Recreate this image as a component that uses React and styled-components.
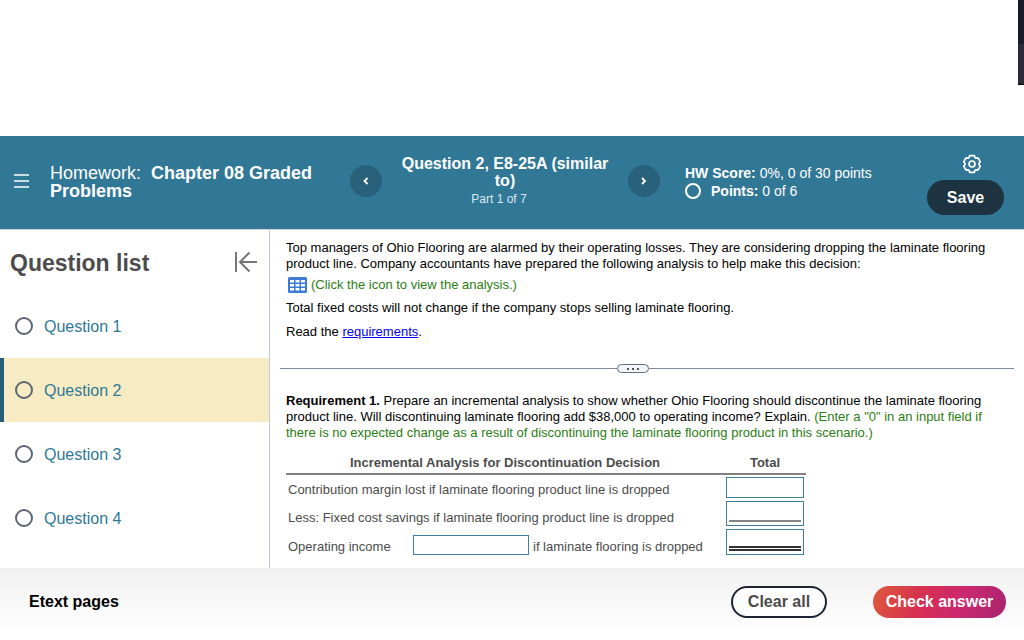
import React from "react";
import styled, { createGlobalStyle } from "styled-components";

const questions = ["Question 1", "Question 2", "Question 3", "Question 4"];

function App() {
  const current = 1;

  return (
    <Page>
      <GlobalStyle />
      <TopSpace>
        <Strip />
      </TopSpace>

      <Header>
        <MenuButton aria-label="Menu">
          <svg width="16" height="14" viewBox="0 0 16 14" fill="none" stroke="#fff" strokeWidth="1.6">
            <path d="M0 1h15M0 7h15M0 13h15" />
          </svg>
        </MenuButton>
        <HomeworkTitle>
          Homework:&nbsp; <b>Chapter 08 Graded Problems</b>
        </HomeworkTitle>
        <QuestionNav>
          <RoundButton aria-label="Previous question">
            <svg width="8" height="10" viewBox="0 0 8 10" fill="none" stroke="#fff" strokeWidth="1.8">
              <path d="M5.500 2L2.500 5L5.500 8" />
            </svg>
          </RoundButton>
          <NavText>
            <h2>Question 2, E8-25A (similar to)</h2>
            <p>Part 1 of 7</p>
          </NavText>
          <RoundButton aria-label="Next question">
            <svg width="8" height="10" viewBox="0 0 8 10" fill="none" stroke="#fff" strokeWidth="1.8">
              <path d="M2 2L5 5L2 8" />
            </svg>
          </RoundButton>
        </QuestionNav>
        <Score>
          <div>
            <b>HW Score:</b> 0%, 0 of 30 points
          </div>
          <PointsRow>
            <Ring $size={16} $color="#fff" />
            <span>
              <b>Points:</b> 0 of 6
            </span>
          </PointsRow>
        </Score>
        <Actions>
          <IconButton aria-label="Settings">
            <svg width="20" height="20" viewBox="0 0 20 20" fill="none" stroke="#fff" strokeWidth="1.7" strokeLinejoin="round">
              <path d="M7.600 1.700h4.800Q12.800 5.200 16 3.800L18.300 7.900Q15.600 10 18.300 12.100L16 16.200Q12.800 14.800 12.400 18.300H7.600Q7.200 14.800 4 16.200L1.700 12.100Q4.400 10 1.700 7.900L4 3.800Q7.200 5.200 7.600 1.700z" />
              <circle cx="10" cy="10" r="3" />
            </svg>
          </IconButton>
          <SaveButton>Save</SaveButton>
        </Actions>
      </Header>

      <Body>
        <Sidebar>
          <SidebarHead>
            <h1>Question list</h1>
            <IconButton aria-label="Collapse question list">
              <svg width="24" height="22" viewBox="0 0 24 22" fill="none" stroke="#757776" strokeWidth="2">
                <path d="M2 1v20M23 11H6M15.500 1.500L6 11l9.500 9.500" />
              </svg>
            </IconButton>
          </SidebarHead>
          <List>
            {questions.map((name, i) => (
              <QuestionItem key={name} $active={i === current}>
                <Ring $size={18} $color="#5b6570" />
                <a href="#question">{name}</a>
              </QuestionItem>
            ))}
          </List>
        </Sidebar>

        <Content>
          <Problem>
            <p>
              Top managers of Ohio Flooring are alarmed by their operating losses. They are considering dropping the
              laminate flooring product line. Company accountants have prepared the following analysis to help make
              this decision:
            </p>
            <AnalysisButton>
              <svg width="19" height="16" viewBox="0 0 19 16">
                <rect width="19" height="16" rx="1.500" fill="#3b7bd6" />
                <path
                  fill="#fff"
                  d="M2 3h4v2.500H2zM7.500 3h4v2.500h-4zM13 3h4v2.500h-4zM2 7h4v2.500H2zM7.500 7h4v2.500h-4zM13 7h4v2.500h-4zM2 11h4v2.500H2zM7.500 11h4v2.500h-4zM13 11h4v2.500h-4z"
                />
              </svg>
              (Click the icon to view the analysis.)
            </AnalysisButton>
            <p>Total fixed costs will not change if the company stops selling laminate flooring.</p>
            <p>
              Read the <a href="#requirements">requirements</a>.
            </p>
          </Problem>

          <Divider>
            <Handle aria-label="Resize panels">
              <i />
              <i />
              <i />
            </Handle>
          </Divider>

          <Requirement>
            <p>
              <b>Requirement 1.</b> Prepare an incremental analysis to show whether Ohio Flooring should discontinue
              the laminate flooring product line. Will discontinuing laminate flooring add $38,000 to operating
              income? Explain.{" "}
              <Hint>
                (Enter a "0" in an input field if there is no expected change as a result of discontinuing the
                laminate flooring product in this scenario.)
              </Hint>
            </p>
            <Table>
              <thead>
                <tr>
                  <th>Incremental Analysis for Discontinuation Decision</th>
                  <th>Total</th>
                </tr>
              </thead>
              <tbody>
                <tr>
                  <td>
                    <label htmlFor="margin">Contribution margin lost if laminate flooring product line is dropped</label>
                  </td>
                  <td>
                    <Field $height={21}>
                      <input id="margin" type="text" />
                    </Field>
                  </td>
                </tr>
                <tr>
                  <td>
                    <label htmlFor="savings">Less: Fixed cost savings if laminate flooring product line is dropped</label>
                  </td>
                  <td>
                    <Field $height={25} $rule="2px solid #858585">
                      <input id="savings" type="text" />
                    </Field>
                  </td>
                </tr>
                <tr>
                  <td>
                    <IncomeRow>
                      <label htmlFor="income">Operating income</label>
                      <DirectionInput type="text" aria-label="Increase or decrease" />
                      <span>if laminate flooring is dropped</span>
                    </IncomeRow>
                  </td>
                  <td>
                    <Field $height={26} $rule="5px double #333">
                      <input id="income" type="text" />
                    </Field>
                  </td>
                </tr>
              </tbody>
            </Table>
          </Requirement>
        </Content>
      </Body>

      <Footer>
        <a href="#etext">Etext pages</a>
        <ClearButton>Clear all</ClearButton>
        <CheckButton>Check answer</CheckButton>
      </Footer>
    </Page>
  );
}

export default App;

const GlobalStyle = createGlobalStyle`
  * {
    box-sizing: border-box;
  }
  body {
    margin: 0;
    background: #fff;
    color: #000;
    font-family: "Liberation Sans", Arial, sans-serif;
    font-size: 13px;
  }
  h1, h2, p, ul {
    margin: 0;
    padding: 0;
  }
  button, input {
    font-family: inherit;
  }
  button {
    border: none;
    padding: 0;
    background: none;
    cursor: pointer;
  }
  svg {
    display: block;
    flex: none;
  }
`;

const Page = styled.div`
  display: flex;
  flex-direction: column;
  min-height: 100vh;
`;

const TopSpace = styled.div`
  display: flex;
  justify-content: flex-end;
  align-items: flex-start;
  height: 136px;
`;

const Strip = styled.div`
  width: 6px;
  height: 85px;
  background: linear-gradient(#181c26 44px, #2b2c38 44px);
  border-bottom: 1px solid #000;
`;

const Header = styled.header`
  display: grid;
  grid-template-columns: 36px 300fr 335fr 242fr 77px;
  align-items: center;
  padding: 10px 20px 14px 14px;
  border-bottom: 1px solid #cfcfe0;
  background: #317796;
  color: #fff;
`;

const MenuButton = styled.button`
  justify-self: start;
`;

const HomeworkTitle = styled.div`
  padding: 2px 30px 0 0;
  font-size: 18px;
  line-height: 18px;
`;

const QuestionNav = styled.nav`
  display: flex;
  align-items: center;
  justify-content: space-between;
  padding-right: 25px;
`;

const RoundButton = styled.button`
  display: flex;
  align-items: center;
  justify-content: center;
  width: 32px;
  height: 32px;
  border-radius: 50%;
  background: #29617b;
`;

const NavText = styled.div`
  flex: 1;
  padding: 0 16px;
  text-align: center;
  > h2 {
    font-size: 16px;
    line-height: 17px;
  }
  > p {
    padding: 2px 12px 0 0;
    color: #dbe8f0;
    font-size: 12px;
    line-height: 16px;
  }
`;

const Score = styled.div`
  padding-top: 2px;
  font-size: 14px;
  line-height: 18px;
`;

const PointsRow = styled.div`
  display: flex;
  align-items: center;
  gap: 10px;
`;

const Ring = styled.span`
  flex: none;
  width: ${(props) => props.$size}px;
  height: ${(props) => props.$size}px;
  border: 2px solid ${(props) => props.$color};
  border-radius: 50%;
`;

const Actions = styled.div`
  display: flex;
  flex-direction: column;
  align-items: center;
  gap: 6px;
  padding-top: 8px;
`;

const IconButton = styled.button`
  margin-left: 12px;
`;

const SaveButton = styled.button`
  width: 100%;
  height: 35px;
  border-radius: 18px;
  background: #1e3341;
  color: #fff;
  font-size: 16px;
  font-weight: bold;
`;

const Body = styled.div`
  display: flex;
  flex: 1;
`;

const Sidebar = styled.aside`
  flex: none;
  width: 270px;
  border-right: 1px solid #c8c8d4;
`;

const SidebarHead = styled.div`
  display: flex;
  align-items: center;
  justify-content: space-between;
  height: 64px;
  padding: 0 11px 0 10px;
  > h1 {
    padding-top: 2px;
    color: #4c4c4c;
    font-size: 23px;
  }
`;

const List = styled.ul`
  list-style: none;
`;

const QuestionItem = styled.li`
  display: flex;
  align-items: center;
  gap: 11px;
  height: 64px;
  padding-left: 11px;
  border-left: 4px solid ${(props) => (props.$active ? "#235f78" : "transparent")};
  background: ${(props) => (props.$active ? "#f6ebc3" : "transparent")};
  > a {
    padding-top: 2px;
    color: #2f7896;
    font-size: 16px;
    text-decoration: none;
  }
`;

const Content = styled.main`
  flex: 1;
  padding: 10px;
  line-height: 16px;
`;

const Problem = styled.section`
  display: flex;
  flex-direction: column;
  gap: 8px;
  padding: 0 6px;
  > p > a {
    color: #0000ee;
  }
`;

const AnalysisButton = styled.button`
  display: flex;
  align-items: center;
  gap: 4px;
  margin: -5px 0 -3px 2px;
  align-self: flex-start;
  color: #2b7d14;
  font-size: 13px;
  line-height: 20px;
`;

const Divider = styled.div`
  display: flex;
  align-items: center;
  margin: 24px 0 20px;
  &::before,
  &::after {
    content: "";
    flex: 337 1 0;
    height: 1px;
    background: #7d8b9b;
  }
  &::after {
    flex-grow: 365;
  }
`;

const Handle = styled.button`
  display: flex;
  align-items: center;
  justify-content: center;
  gap: 3px;
  width: 32px;
  height: 9px;
  border: 1px solid #5f6f80;
  border-radius: 5px;
  background: #f3f6f8;
  > i {
    width: 2px;
    height: 2px;
    background: #4a5560;
  }
`;

const Requirement = styled.section`
  padding: 0 6px;
`;

const Hint = styled.span`
  color: #2b7d14;
`;

const Table = styled.table`
  width: 520px;
  margin-top: 14px;
  border-collapse: collapse;
  color: #4c4c4c;
  th {
    padding: 0 0 2px;
    border-bottom: 2px solid #808080;
  }
  th:last-child {
    width: 82px;
  }
  td {
    padding: 2px 2px 1px;
    vertical-align: bottom;
  }
`;

const Field = styled.div`
  height: ${(props) => props.$height}px;
  padding: 0 2px 3px;
  border: 1px solid #3d7f9c;
  > input {
    display: block;
    width: 100%;
    height: 100%;
    padding: 0;
    border: none;
    border-bottom: ${(props) => props.$rule || "none"};
    outline: none;
    background: none;
    text-align: right;
  }
`;

const IncomeRow = styled.div`
  display: flex;
  align-items: flex-end;
  gap: 4px;
  > label {
    width: 121px;
  }
`;

const DirectionInput = styled.input`
  width: 116px;
  height: 20px;
  padding: 0 2px;
  border: 1px solid #3d7f9c;
  background: #fff;
`;

const Footer = styled.footer`
  display: flex;
  align-items: center;
  height: 72px;
  padding: 0 18px 4px 29px;
  background: linear-gradient(#f1f1f1, #fff 90%);
  > a {
    margin-right: auto;
    color: #000;
    font-size: 16px;
    font-weight: bold;
    text-decoration: none;
  }
`;

const PillButton = styled.button`
  height: 32px;
  border-radius: 16px;
  font-size: 16px;
  font-weight: bold;
`;

const ClearButton = styled(PillButton)`
  width: 96px;
  margin-right: 46px;
  border: 2px solid #1d2433;
  background: #fff;
  color: #4c4c4c;
`;

const CheckButton = styled(PillButton)`
  width: 133px;
  background: linear-gradient(110deg, #df5b3b, #d6314f 35%, #cc2870 65%, #a8236f);
  color: #fff;
`;
